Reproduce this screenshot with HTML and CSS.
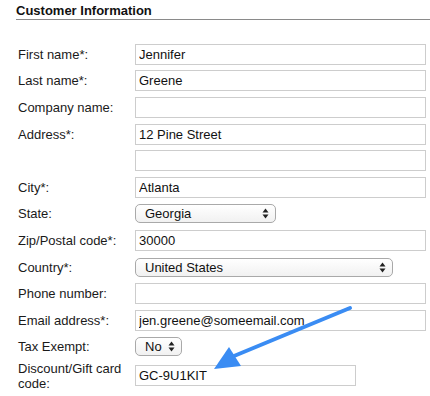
FILE: index.html
```html
<!DOCTYPE html>
<html lang="en">

<head>
	<meta charset="UTF-8">
	<meta name="viewport" content="width=device-width, initial-scale=1.0">
	<title>Customer Information</title>
	<link rel="stylesheet" href="styles.css">
</head>

<body>
	<div class="customer-info">
		<h2>Customer Information</h2>

		<form class="info-form">
			<label class="field-label">First name*:</label>
			<div class="field"><input type="text" value="Jennifer"></div>

			<label class="field-label">Last name*:</label>
			<div class="field"><input type="text" value="Greene"></div>

			<label class="field-label">Company name:</label>
			<div class="field"><input type="text" value=""></div>

			<label class="field-label">Address*:</label>
			<div class="field"><input type="text" value="12 Pine Street"></div>

			<label class="field-label"></label>
			<div class="field"><input type="text" value=""></div>

			<label class="field-label">City*:</label>
			<div class="field"><input type="text" value="Atlanta"></div>

			<label class="field-label">State:</label>
			<div class="field">
				<span class="select-wrap state">
					<select><option>Georgia</option></select>
					<svg class="select-icon" width="7" height="11" viewBox="0 0 7 11"><path d="M3.5 0.5L6.5 4.5H0.5Z M3.5 10.5L6.5 6.5H0.5Z" fill="#222"/></svg>
				</span>
			</div>

			<label class="field-label">Zip/Postal code*:</label>
			<div class="field"><input type="text" value="30000"></div>

			<label class="field-label">Country*:</label>
			<div class="field">
				<span class="select-wrap country">
					<select><option>United States</option></select>
					<svg class="select-icon" width="7" height="11" viewBox="0 0 7 11"><path d="M3.5 0.5L6.5 4.5H0.5Z M3.5 10.5L6.5 6.5H0.5Z" fill="#222"/></svg>
				</span>
			</div>

			<label class="field-label">Phone number:</label>
			<div class="field"><input type="text" value=""></div>

			<label class="field-label">Email address*:</label>
			<div class="field"><input type="text" value="jen.greene@someemail.com"></div>

			<label class="field-label">Tax Exempt:</label>
			<div class="field">
				<span class="select-wrap tax">
					<select><option>No</option></select>
					<svg class="select-icon" width="7" height="11" viewBox="0 0 7 11"><path d="M3.5 0.5L6.5 4.5H0.5Z M3.5 10.5L6.5 6.5H0.5Z" fill="#222"/></svg>
				</span>
			</div>

			<label class="field-label">Discount/Gift card code:</label>
			<div class="field"><input type="text" class="short" value="GC-9U1KIT"></div>
		</form>

		<svg class="callout" width="430" height="396" viewBox="0 0 430 396">
			<line x1="350" y1="308" x2="234" y2="356" stroke="#3a8cf3" stroke-width="4" stroke-linecap="round"/>
			<polygon points="214,369 229,347 241,366" fill="#3a8cf3"/>
		</svg>
	</div>
</body>

</html>
```

FILE: styles.css
```css
body {
	margin: 0;
	font-family: "Liberation Sans", Arial, sans-serif;
	font-size: 13px;
	color: #111;
	background-color: white;
}

.customer-info {
	position: relative;
	padding: 3px 0 0 16px;
}

.customer-info h2 {
	margin: 0;
	font-size: 13px;
	font-weight: bold;
	color: #111;
	padding-bottom: 1px;
	border-bottom: 1px solid #8a8a8a;
}

.info-form {
	display: grid;
	grid-template-columns: 119px 1fr;
	grid-template-rows: repeat(12, 26.6px) 31px;
	margin-top: 21px;
	padding-right: 4px;
}

.field-label {
	display: flex;
	align-items: center;
	padding-left: 2px;
	line-height: 15px;
	color: #1a1a1a;
}

.field {
	display: flex;
	align-items: center;
}

.field input {
	box-sizing: border-box;
	width: 100%;
	height: 21px;
	margin: 0;
	padding: 0 3px;
	border: 1px solid #cdcdcd;
	font-family: inherit;
	font-size: 13px;
	color: #111;
	background: white;
	outline: none;
}

.field input.short {
	width: 221px;
}

.select-wrap {
	position: relative;
	display: inline-block;
	height: 19px;
}

.select-wrap select {
	appearance: none;
	-webkit-appearance: none;
	box-sizing: border-box;
	width: 100%;
	height: 19px;
	margin: 0;
	padding: 0 0 0 9px;
	border: 1px solid #a9a9a9;
	border-radius: 5px;
	background: linear-gradient(#ffffff, #f1f1f1);
	font-family: inherit;
	font-size: 13px;
	color: #111;
	line-height: 17px;
}

.select-icon {
	position: absolute;
	right: 7px;
	top: 4px;
}

.select-wrap.state {
	width: 141px;
}

.select-wrap.country {
	width: 258px;
}

.select-wrap.tax {
	width: 47px;
}

.callout {
	position: absolute;
	left: 0;
	top: 0;
	pointer-events: none;
}
```
